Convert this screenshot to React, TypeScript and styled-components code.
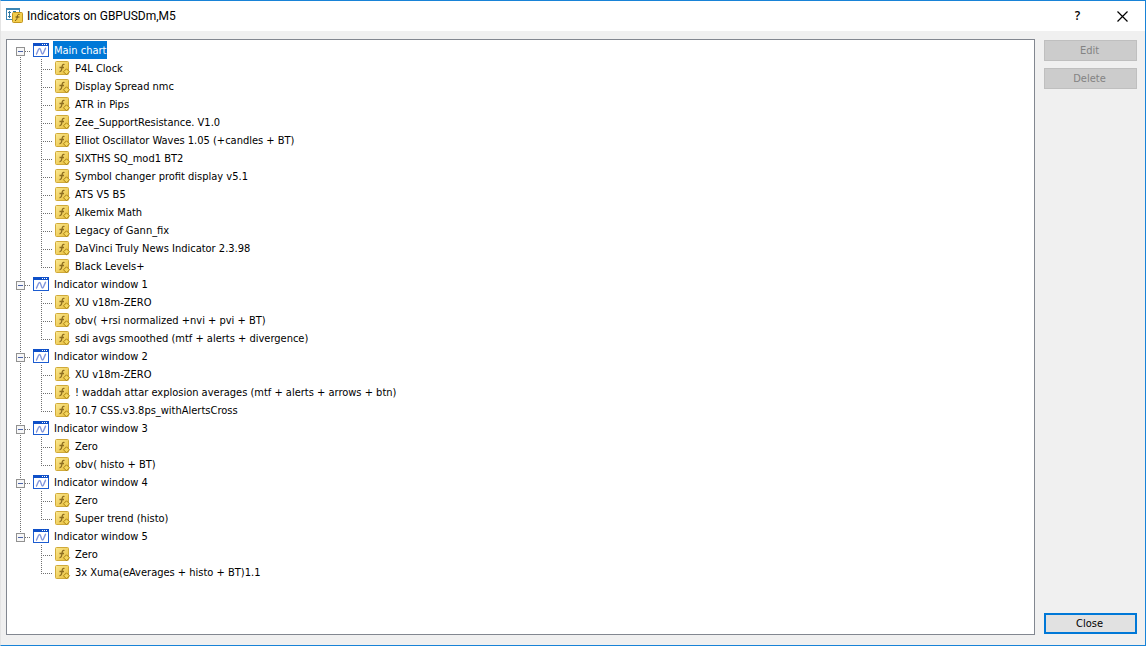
import React, { useState } from 'react';
import styled, { createGlobalStyle, css } from 'styled-components';

const GlobalStyle = createGlobalStyle`
  *, *::before, *::after { box-sizing: border-box; }
  body { margin: 0; background: #fff; }
`;

const Dialog = styled.main`
  display: flex;
  flex-direction: column;
  height: calc(100vh - 1px);
  border: 1px solid #1883d7;
  border-left-color: #e4e4e4;
  background: #f0f0f0;
  color: #000;
  font: 11px/16px 'DejaVu Sans Condensed', Tahoma, sans-serif;
`;

const TitleBar = styled.header`
  display: flex;
  align-items: center;
  height: 30px;
  padding-left: 5px;
  background: #fff;
`;

const Title = styled.h1`
  flex: 1;
  margin: 0 0 0 4px;
  font: 12px/16px Roboto, 'Segoe UI', sans-serif;
`;

const CaptionButton = styled.button`
  display: flex;
  align-items: center;
  justify-content: center;
  width: 45px;
  height: 30px;
  padding: 0;
  border: 0;
  background: none;
  font: 600 12px/16px 'Open Sans', sans-serif;
`;

const Content = styled.div`
  display: flex;
  flex: 1;
  gap: 9px;
  min-height: 0;
  padding: 8px 8px 10px 5px;
`;

const TreePanel = styled.section`
  flex: 1;
  min-width: 0;
  overflow: auto;
  padding: 1px 0 0 9px;
  border: 1px solid #828790;
  background: #fff;
`;

const dotsDown = 'repeating-linear-gradient(to bottom, #707070 0 1px, transparent 1px 2px)';
const dotsAcross = 'repeating-linear-gradient(to right, #707070 0 1px, transparent 1px 2px)';

const List = styled.ul`
  margin: 0;
  padding: 0;
  list-style: none;
`;

const Group = styled.li`
  background: ${dotsDown} 4px 0 / 1px 100% no-repeat;
  &:first-child { background-position: 4px 10px; }
  &:last-child { background-size: 1px 10px; }
`;

const GroupRow = styled.div`
  display: flex;
  align-items: center;
  height: 18px;
`;

const Toggle = styled.button`
  display: flex;
  width: 9px;
  height: 9px;
  margin-top: 2px;
  padding: 0;
  border: 0;
  background: none;
`;

const Connector = styled.span<{ $width: number }>`
  width: ${({ $width }) => $width}px;
  height: 1px;
  margin: 2px 3px 0 0;
  background: ${dotsAcross};
`;

const GroupLabel = styled.span<{ $selected: boolean }>`
  margin-left: 4px;
  padding: 2px 0 0 1px;
  white-space: nowrap;
  ${({ $selected }) => $selected && css`
    background: #0078d7;
    color: #fff;
  `}
`;

const Children = styled(List)`
  margin-left: 25px;
`;

const Item = styled.li`
  display: flex;
  align-items: center;
  height: 18px;
  white-space: nowrap;
  background: ${dotsDown} 0 0 / 1px 100% no-repeat;
  &:last-child { background-size: 1px 10px; }
`;

const ItemLabel = styled.span`
  margin-left: 4px;
  padding-top: 2px;
`;

const Actions = styled.aside`
  display: flex;
  flex-direction: column;
  gap: 7px;
  width: 93px;
  padding: 1px 0;
`;

const ActionButton = styled.button<{ $primary?: boolean }>`
  height: 21px;
  padding: 1px 2px 0 0;
  border: 1px solid #adadad;
  background: #e1e1e1;
  color: #000;
  font: inherit;
  &:disabled {
    border-color: #bfbfbf;
    background: #ccc;
    color: #838383;
  }
  ${({ $primary }) => $primary && css`
    margin-top: auto;
    border: 2px solid #0078d7;
  `}
`;

const AppIcon = () => (
  <svg width="17" height="16" viewBox="0 0 17 16" aria-hidden="true">
    <rect x="0.5" y="0.5" width="13" height="11" fill="#fff" stroke="#3d86b4" />
    <path d="M0 1h14" stroke="#3d86b4" strokeWidth="2" />
    <path d="M3.5 3v7M2 4.500h3M2 8.500h3M8.500 3v2M7 3.500h3" stroke="#31789f" fill="none" />
    <rect x="6.5" y="4.5" width="10" height="10" rx="1" fill="#f2cc4c" stroke="#c3961e" />
    <path d="M13.500 6.500c-1.600-.5-2 .4-2.300 2.400-.3 2.300-.6 3.700-2.200 3.500M9.500 9h4" stroke="#6d5213" fill="none" />
  </svg>
);

const ChartIcon = () => (
  <svg width="16" height="14" viewBox="0 0 16 14" aria-hidden="true">
    <rect x="0.5" y="0.5" width="15" height="13" fill="#fff" stroke="#1c5cd0" />
    <path d="M0 0h16v3H0z" fill="#0f50c8" />
    <path d="M9 1.5h1M11 1.5h1M13 1.5h1" stroke="#fff" />
    <path d="M3 11.500C4.500 11 4.800 5.500 6.500 5.500S8 11 9.500 11 11.500 5.500 13 5" stroke="#8296dc" strokeWidth="1.400" fill="none" />
  </svg>
);

const FunctionIcon = () => (
  <svg width="16" height="16" viewBox="0 0 16 16" aria-hidden="true">
    <defs>
      <linearGradient id="gold" x1="0" y1="0" x2="1" y2="1">
        <stop offset="0" stopColor="#fbe993" />
        <stop offset="1" stopColor="#e8bd38" />
      </linearGradient>
    </defs>
    <rect x="0.5" y="1.5" width="13" height="13" rx="1" fill="url(#gold)" stroke="#d0aa3a" />
    <path d="M9.500 4.500C7.800 4 7.300 5 7 7.300c-.3 2.500-.8 4.500-2.500 4.200M4.500 7.500H9" stroke="#8c6c20" strokeWidth="1.300" fill="none" />
    <path d="M11.500 8.800l3 3-3 3-3-3z" fill="#f4d65b" stroke="#a98016" />
  </svg>
);

const ToggleIcon = ({ open }: { open: boolean }) => (
  <svg width="9" height="9" viewBox="0 0 9 9" aria-hidden="true">
    <rect x="0.5" y="0.5" width="8" height="8" fill="#f7f7f7" stroke="#919191" />
    <path d={open ? 'M2 4.5h5' : 'M2 4.5h5M4.5 2v5'} stroke="#4b63a7" />
  </svg>
);

const groups = [
  {
    name: 'Main chart',
    items: [
      'P4L Clock', 'Display Spread nmc', 'ATR in Pips', 'Zee_SupportResistance. V1.0',
      'Elliot Oscillator Waves 1.05 (+candles + BT)', 'SIXTHS SQ_mod1 BT2',
      'Symbol changer profit display v5.1', 'ATS V5 B5', 'Alkemix Math',
      'Legacy of Gann_fix', 'DaVinci Truly News Indicator 2.3.98', 'Black Levels+',
    ],
  },
  { name: 'Indicator window 1', items: ['XU v18m-ZERO', 'obv( +rsi normalized +nvi + pvi + BT)', 'sdi avgs smoothed (mtf + alerts + divergence)'] },
  { name: 'Indicator window 2', items: ['XU v18m-ZERO', '! waddah attar explosion averages (mtf + alerts + arrows + btn)', '10.7 CSS.v3.8ps_withAlertsCross'] },
  { name: 'Indicator window 3', items: ['Zero', 'obv( histo + BT)'] },
  { name: 'Indicator window 4', items: ['Zero', 'Super trend (histo)'] },
  { name: 'Indicator window 5', items: ['Zero', '3x Xuma(eAverages + histo + BT)1.1'] },
];

export default function App() {
  const [closed, setClosed] = useState<string[]>([]);
  const toggle = (name: string) =>
    setClosed((c) => (c.includes(name) ? c.filter((n) => n !== name) : [...c, name]));

  return (
    <>
      <GlobalStyle />
      <Dialog>
        <TitleBar>
          <AppIcon />
          <Title>Indicators on GBPUSDm,M5</Title>
          <CaptionButton aria-label="Help">?</CaptionButton>
          <CaptionButton aria-label="Close window">
            <svg width="11" height="11" viewBox="0 0 11 11" aria-hidden="true">
              <path d="M.5.500l10 10M10.500.500l-10 10" stroke="#000" strokeWidth="1.200" />
            </svg>
          </CaptionButton>
        </TitleBar>
        <Content>
          <TreePanel aria-label="Indicators">
            <List>
              {groups.map((group, index) => {
                const open = !closed.includes(group.name);
                return (
                  <Group key={group.name}>
                    <GroupRow>
                      <Toggle aria-label={`Toggle ${group.name}`} aria-expanded={open} onClick={() => toggle(group.name)}>
                        <ToggleIcon open={open} />
                      </Toggle>
                      <Connector $width={5} />
                      <ChartIcon />
                      <GroupLabel $selected={index === 0}>{group.name}</GroupLabel>
                    </GroupRow>
                    {open && (
                      <Children>
                        {group.items.map((item) => (
                          <Item key={item}>
                            <Connector $width={11} />
                            <FunctionIcon />
                            <ItemLabel>{item}</ItemLabel>
                          </Item>
                        ))}
                      </Children>
                    )}
                  </Group>
                );
              })}
            </List>
          </TreePanel>
          <Actions>
            <ActionButton disabled>Edit</ActionButton>
            <ActionButton disabled>Delete</ActionButton>
            <ActionButton $primary>Close</ActionButton>
          </Actions>
        </Content>
      </Dialog>
    </>
  );
}
